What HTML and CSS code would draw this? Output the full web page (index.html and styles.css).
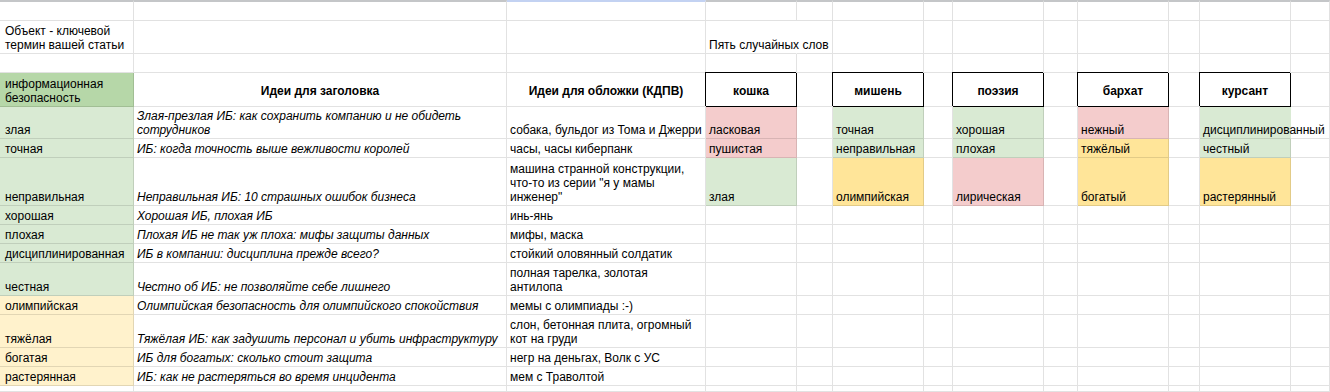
FILE: index.html
```html
<!DOCTYPE html>
<html lang="ru">
<head>
<meta charset="utf-8">
<title>Sheet</title>
<link rel="stylesheet" href="styles.css">
</head>
<body>
<div class="sheet">
  <!-- row 1 -->
  <div class="c top first"></div><div class="c top"></div><div class="c top sel"></div><div class="c top"></div><div class="c top"></div><div class="c top"></div><div class="c top"></div><div class="c top"></div><div class="c top"></div><div class="c top"></div><div class="c top"></div><div class="c top"></div><div class="c top"></div>
  <!-- row 2 -->
  <div class="c first">Объект - ключевой термин вашей статьи</div><div class="c"></div><div class="c"></div><div class="c nw noright">Пять случайных слов</div><div class="c"></div><div class="c"></div><div class="c"></div><div class="c"></div><div class="c"></div><div class="c"></div><div class="c"></div><div class="c"></div><div class="c"></div>
  <!-- row 3 -->
  <div class="c first"></div><div class="c"></div><div class="c"></div><div class="c"></div><div class="c"></div><div class="c"></div><div class="c"></div><div class="c"></div><div class="c"></div><div class="c"></div><div class="c"></div><div class="c"></div><div class="c"></div>
  <!-- row 4 -->
  <div class="c first gh">информационная безопасность</div>
  <div class="c hd">Идеи для заголовка</div>
  <div class="c hd">Идеи для обложки (КДПВ)</div>
  <div class="c hd box">кошка</div><div class="c"></div>
  <div class="c hd box">мишень</div><div class="c"></div>
  <div class="c hd box">поэзия</div><div class="c"></div>
  <div class="c hd box">бархат</div><div class="c"></div>
  <div class="c hd box">курсант</div><div class="c"></div>
  <!-- row 5 -->
  <div class="c first g">злая</div>
  <div class="c i">Злая-презлая ИБ: как сохранить компанию и не обидеть сотрудников</div>
  <div class="c">собака, бульдог из Тома и Джерри</div>
  <div class="c r">ласковая</div><div class="c"></div>
  <div class="c g">точная</div><div class="c"></div>
  <div class="c g">хорошая</div><div class="c"></div>
  <div class="c r">нежный</div><div class="c"></div>
  <div class="c g nw noright">дисциплинированный</div><div class="c"></div>
  <!-- row 6 -->
  <div class="c first g">точная</div>
  <div class="c i">ИБ: когда точность выше вежливости королей</div>
  <div class="c">часы, часы киберпанк</div>
  <div class="c r">пушистая</div><div class="c"></div>
  <div class="c g">неправильная</div><div class="c"></div>
  <div class="c g">плохая</div><div class="c"></div>
  <div class="c y">тяжёлый</div><div class="c"></div>
  <div class="c g">честный</div><div class="c"></div>
  <!-- row 7 -->
  <div class="c first g">неправильная</div>
  <div class="c i">Неправильная ИБ: 10 страшных ошибок бизнеса</div>
  <div class="c">машина странной конструкции, что-то из серии "я у мамы инженер"</div>
  <div class="c g">злая</div><div class="c"></div>
  <div class="c y">олимпийская</div><div class="c"></div>
  <div class="c r">лирическая</div><div class="c"></div>
  <div class="c y">богатый</div><div class="c"></div>
  <div class="c y">растерянный</div><div class="c"></div>
  <!-- row 8 -->
  <div class="c first g">хорошая</div>
  <div class="c i">Хорошая ИБ, плохая ИБ</div>
  <div class="c">инь-янь</div>
  <div class="c"></div><div class="c"></div><div class="c"></div><div class="c"></div><div class="c"></div><div class="c"></div><div class="c"></div><div class="c"></div><div class="c"></div><div class="c"></div>
  <!-- row 9 -->
  <div class="c first g">плохая</div>
  <div class="c i">Плохая ИБ не так уж плоха: мифы защиты данных</div>
  <div class="c">мифы, маска</div>
  <div class="c"></div><div class="c"></div><div class="c"></div><div class="c"></div><div class="c"></div><div class="c"></div><div class="c"></div><div class="c"></div><div class="c"></div><div class="c"></div>
  <!-- row 10 -->
  <div class="c first g">дисциплинированная</div>
  <div class="c i">ИБ в компании: дисциплина прежде всего?</div>
  <div class="c">стойкий оловянный солдатик</div>
  <div class="c"></div><div class="c"></div><div class="c"></div><div class="c"></div><div class="c"></div><div class="c"></div><div class="c"></div><div class="c"></div><div class="c"></div><div class="c"></div>
  <!-- row 11 -->
  <div class="c first g">честная</div>
  <div class="c i">Честно об ИБ: не позволяйте себе лишнего</div>
  <div class="c">полная тарелка, золотая антилопа</div>
  <div class="c"></div><div class="c"></div><div class="c"></div><div class="c"></div><div class="c"></div><div class="c"></div><div class="c"></div><div class="c"></div><div class="c"></div><div class="c"></div>
  <!-- row 12 -->
  <div class="c first ly">олимпийская</div>
  <div class="c i">Олимпийская безопасность для олимпийского спокойствия</div>
  <div class="c">мемы с олимпиады :-)</div>
  <div class="c"></div><div class="c"></div><div class="c"></div><div class="c"></div><div class="c"></div><div class="c"></div><div class="c"></div><div class="c"></div><div class="c"></div><div class="c"></div>
  <!-- row 13 -->
  <div class="c first ly">тяжёлая</div>
  <div class="c i">Тяжёлая ИБ: как задушить персонал и убить инфраструктуру</div>
  <div class="c">слон, бетонная плита, огромный кот на груди</div>
  <div class="c"></div><div class="c"></div><div class="c"></div><div class="c"></div><div class="c"></div><div class="c"></div><div class="c"></div><div class="c"></div><div class="c"></div><div class="c"></div>
  <!-- row 14 -->
  <div class="c first ly">богатая</div>
  <div class="c i">ИБ для богатых: сколько стоит защита</div>
  <div class="c">негр на деньгах, Волк с УС</div>
  <div class="c"></div><div class="c"></div><div class="c"></div><div class="c"></div><div class="c"></div><div class="c"></div><div class="c"></div><div class="c"></div><div class="c"></div><div class="c"></div>
  <!-- row 15 -->
  <div class="c first ly">растерянная</div>
  <div class="c i">ИБ: как не растеряться во время инцидента</div>
  <div class="c">мем с Траволтой</div>
  <div class="c"></div><div class="c"></div><div class="c"></div><div class="c"></div><div class="c"></div><div class="c"></div><div class="c"></div><div class="c"></div><div class="c"></div><div class="c"></div>
  <!-- row 16 -->
  <div class="c first"></div><div class="c"></div><div class="c"></div><div class="c"></div><div class="c"></div><div class="c"></div><div class="c"></div><div class="c"></div><div class="c"></div><div class="c"></div><div class="c"></div><div class="c"></div><div class="c"></div>
</div>
</body>
</html>
```

FILE: styles.css
```css
html, body {
  margin: 0;
  padding: 0;
  background: #ffffff;
}

body {
  width: 1330px;
  height: 392px;
  overflow: hidden;
  font-family: "Liberation Sans", Arial, sans-serif;
  font-size: 12px;
  line-height: 14px;
  color: #000000;
}

.sheet {
  display: grid;
  grid-template-columns: 134px 373px 199px 91px 36px 91px 29px 91px 34px 91px 31px 91px 1fr;
  grid-template-rows: 21px 33px 19px 34px 32px 19px 48px 19px 19px 19px 33px 19px 33px 19px 19px 1fr;
  height: 392px;
}

.c {
  box-sizing: border-box;
  display: flex;
  flex-direction: column;
  justify-content: flex-end;
  padding: 0 3px 1px 3px;
  border-right: 1px solid rgba(0, 0, 0, 0.115);
  border-bottom: 1px solid rgba(0, 0, 0, 0.115);
  min-width: 0;
  overflow: visible;
}

.first {
  padding-left: 5px;
}

.top {
  border-top: 2px solid #c4c6c8;
}

.sel {
  border-top-color: #c3d2f2;
}

.nw {
  white-space: nowrap;
}

.noright {
  border-right-color: transparent;
}

.i {
  font-style: italic;
}

.hd {
  justify-content: center;
  align-items: center;
  text-align: center;
  font-weight: bold;
  padding-top: 2px;
  padding-bottom: 0;
}

.box {
  border-right-color: #000000;
  border-bottom-color: #000000;
  box-shadow: -1px -1px 0 0 #000000;
}

.g {
  background: #d9ead3;
}

.gh {
  background: #b6d7a8;
}

.r {
  background: #f4cccc;
}

.y {
  background: #ffe599;
}

.ly {
  background: #fff2cc;
}
```
